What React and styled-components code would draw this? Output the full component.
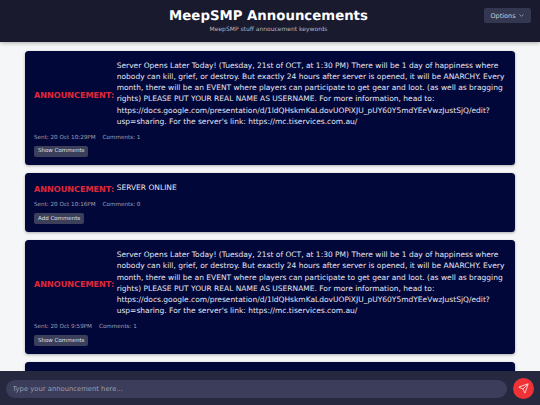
import React from "react";
import styled, { createGlobalStyle } from "styled-components";
import { ChevronDown, Send } from "lucide-react";

const Global = createGlobalStyle`
  html, body { margin: 0; padding: 0; height: 405px; overflow: hidden; background: #f5f6f8; }
  * { box-sizing: border-box; }
  body { font-family: "DejaVu Sans", Verdana, sans-serif; text-rendering: geometricPrecision; }
  button, input { text-rendering: geometricPrecision; }
`;
const Page = styled.div`display: flex; flex-direction: column; width: 540px; height: 405px; overflow: hidden;`;
const Header = styled.header`
  flex: none; height: 42px; background: #1a1a2e; box-shadow: 0 1px 4px rgba(0,0,0,.3);
  display: grid; grid-template-columns: 1fr auto 1fr; align-items: start; padding: 0 9px 0 6px; position: relative; z-index: 2;
`;
const Titles = styled.div`grid-column: 2; text-align: center; padding-top: 9px;`;
const Title = styled.h1`margin: 0; font-size: 13.3px; line-height: 16px; font-weight: 700; color: #fff;`;
const Sub = styled.p`margin: 1px 0 0; font-size: 6px; line-height: 8px; color: #b4b6c2;`;
const Options = styled.button`
  grid-column: 3; justify-self: end; margin-top: 8px; width: 47px; height: 15px; padding: 0; border: 0; border-radius: 2.5px;
  background: #33374f; color: #c9cbd6; font: 6.5px "DejaVu Sans", sans-serif;
  display: flex; align-items: center; justify-content: center; gap: 2px;
`;
const Main = styled.main`flex: 1; min-height: 0; overflow: hidden; padding: 9px 25px 0; display: flex; flex-direction: column; gap: 8px;`;
const Card = styled.article`
  flex: none; background: #02073a; border-radius: 3.5px; padding: 9px 9px 8.2px;
  box-shadow: 0 1px 3px rgba(0,0,0,.3); color: #e4e6f0;
`;
const Row = styled.div`display: flex; align-items: ${p => p.$short ? "flex-start" : "center"}; gap: 2px;`;
const Label = styled.strong`
  flex: none; width: 80.7px; font-size: 8.1px; color: #e0273a; font-weight: 700; white-space: nowrap;
  line-height: ${p => p.$short ? "15px" : "11px"};
  padding-top: ${p => p.$short ? "0" : "4px"};
`;
const Text = styled.p`margin: 0; min-width: 0; flex: 1; font-size: 7.5px; line-height: 11.15px;`;
const Meta = styled.div`display: flex; gap: 7px; margin-top: ${p => p.$short ? "4px" : "7px"}; font-size: 5.65px; line-height: 8px; color: #9ea1b5;`;
const Small = styled.button`
  display: block; margin-top: 4px; height: 11px; padding: 0 4px; border: 0; border-radius: 2px;
  background: #3c3f5a; color: #dfe0ea; font: 5.5px "DejaVu Sans", sans-serif;
`;
const Footer = styled.footer`
  flex: none; height: 34px; background: #25283f; padding: 9px 6px 0; display: flex; align-items: flex-start; gap: 6px; position: relative; z-index: 2;
`;
const Input = styled.input`
  flex: 1; height: 18px; border: 0; border-radius: 9px; background: #3b3d5a; padding: 0 6.5px; color: #fff; font: 6.8px "DejaVu Sans", sans-serif;
  &::placeholder { color: #9b9db0; }
`;
const SendButton = styled.button`
  flex: none; width: 21px; height: 21px; margin-top: -2px; border: 0; border-radius: 50%; padding: 0; background: #f03237; color: #ffd8d8;
  display: flex; align-items: center; justify-content: center;
`;

const LONG = "Server Opens Later Today! (Tuesday, 21st of OCT, at 1:30 PM) There will be 1 day of happiness where nobody can kill, grief, or destroy. But exactly 24 hours after server is opened, it will be ANARCHY. Every month, there will be an EVENT where players can participate to get gear and loot. (as well as bragging rights) PLEASE PUT YOUR REAL NAME AS USERNAME. For more information, head to: https://docs.google.com/presentation/d/1ldQHskmKaLdovUOPiXJU_pUY60Y5mdYEeVwzJustSjQ/edit?usp=sharing. For the server's link: https://mc.tiservices.com.au/";

const posts = [
  { text: LONG, sent: "20 Oct 10:29PM", comments: 1, action: "Show Comments" },
  { text: "SERVER ONLINE", sent: "20 Oct 10:16PM", comments: 0, action: "Add Comments", short: true },
  { text: LONG, sent: "20 Oct 9:59PM", comments: 1, action: "Show Comments" },
  { text: LONG, sent: "20 Oct 9:40PM", comments: 0, action: "Add Comments" },
];

export default function App() {
  return (
    <Page>
      <Global />
      <Header>
        <Titles>
          <Title>MeepSMP Announcements</Title>
          <Sub>MeepSMP stuff annoucement keywords</Sub>
        </Titles>
        <Options>Options <ChevronDown size={7} /></Options>
      </Header>
      <Main>
        {posts.map((p, i) => (
          <Card key={i}>
            <Row $short={p.short}>
              <Label $short={p.short}>ANNOUNCEMENT:</Label>
              <Text>{p.text}</Text>
            </Row>
            <Meta $short={p.short}><span>Sent: {p.sent}</span><span>Comments: {p.comments}</span></Meta>
            <Small>{p.action}</Small>
          </Card>
        ))}
      </Main>
      <Footer>
        <Input placeholder="Type your announcement here..." />
        <SendButton aria-label="Send"><Send size={11} /></SendButton>
      </Footer>
    </Page>
  );
}
